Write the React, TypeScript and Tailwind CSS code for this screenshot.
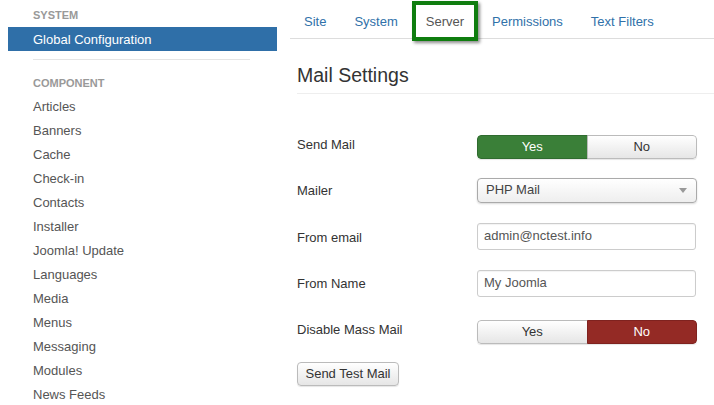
const components = [
  "Articles",
  "Banners",
  "Cache",
  "Check-in",
  "Contacts",
  "Installer",
  "Joomla! Update",
  "Languages",
  "Media",
  "Menus",
  "Messaging",
  "Modules",
  "News Feeds",
];

const tabs = ["Site", "System", "Server", "Permissions", "Text Filters"];

function Toggle({ value }: { value: "yes" | "no" }) {
  const base =
    "flex h-full flex-1 items-center justify-center border text-[13px]";
  const idle =
    "border-[#bbb] bg-gradient-to-b from-white to-[#e6e6e6] text-[#333]";
  return (
    <div className="flex h-[24px] w-[220px] overflow-hidden rounded-[4px] shadow-[0_1px_1px_rgba(0,0,0,0.1)]">
      <div
        className={`${base} rounded-l-[4px] ${
          value === "yes"
            ? "border-[#2f6b2f] bg-[#3a7f38] text-white"
            : idle
        }`}
      >
        Yes
      </div>
      <div
        className={`${base} -ml-px rounded-r-[4px] ${
          value === "no"
            ? "border-[#7f221f] bg-[#942a25] text-white"
            : idle
        }`}
      >
        No
      </div>
    </div>
  );
}

function Row({
  label,
  children,
  pad = false,
}: {
  label: string;
  children: React.ReactNode;
  pad?: boolean;
}) {
  return (
    <div className="flex h-[46px] items-center">
      <div
        className={`w-[180px] text-[13px] text-[#333] ${pad ? "pt-[2px]" : ""}`}
      >
        {label}
      </div>
      {children}
    </div>
  );
}

export default function App() {
  return (
    <div
      className="flex h-[405px] w-[714px] overflow-hidden bg-white"
      style={{ fontFamily: '"Liberation Sans", Arial, sans-serif' }}
    >
      {/* sidebar */}
      <div className="w-[290px] shrink-0 pt-[6px]">
        <div className="h-[18px] pl-[33px] text-[11px] font-bold leading-[18px] text-[#999]">
          SYSTEM
        </div>
        <div className="mt-[3px] ml-[8px] h-[24px] w-[269px] bg-[#2f6fa8] pl-[25px] text-[13px] leading-[25px] text-white">
          Global Configuration
        </div>
        <div className="mt-[8px] ml-[33px] h-px w-[217px] bg-[#e5e5e5]" />
        <div className="mt-[14px] h-[18px] pl-[33px] text-[11px] font-bold leading-[18px] text-[#999]">
          COMPONENT
        </div>
        <ul className="mt-[3px]">
          {components.map((c) => (
            <li
              key={c}
              className="h-[24px] pl-[33px] text-[13px] leading-[24px] text-[#555]"
            >
              {c}
            </li>
          ))}
        </ul>
      </div>

      {/* main */}
      <div className="flex-1">
        <div className="flex h-[39px] border-b border-[#ddd]">
          {tabs.map((t) =>
            t === "Server" ? (
              <div
                key={t}
                className="relative px-[14px] pt-[13px] text-[13px] leading-[18px] text-[#555]"
              >
                {t}
                <div className="absolute left-0 right-0 top-[1px] h-[40px] border-4 border-[#0f7d0f] shadow-[2px_2px_3px_rgba(0,0,0,0.45)]" />
              </div>
            ) : (
              <div
                key={t}
                className="px-[14px] pt-[13px] text-[13px] leading-[18px] text-[#3071a9]"
              >
                {t}
              </div>
            ),
          )}
        </div>

        <div className="pl-[7px]">
          <h3 className="mt-[24px] h-[24px] text-[19.5px] leading-[24px] text-[#333]">
            Mail Settings
          </h3>
          <div className="mt-[6px] h-px bg-[#eee]" />

          <div className="mt-[28px]">
            <Row label="Send Mail">
              <div className="mt-[3px]">
                <Toggle value="yes" />
              </div>
            </Row>
            <Row label="Mailer">
              <div className="-mt-[2px] flex h-[25px] w-[220px] items-center justify-between rounded-[4px] border border-[#aaa] bg-gradient-to-b from-white to-[#eee] pl-[8px] pr-[9px] text-[13px] text-[#444] shadow-[0_1px_2px_rgba(0,0,0,0.15)]">
                <span>PHP Mail</span>
                <svg width="8" height="5" viewBox="0 0 8 5">
                  <path d="M0 0h8L4 5z" fill="#999" />
                </svg>
              </div>
            </Row>
            <Row label="From email" pad>
              <div className="-mt-[2px] flex h-[27px] w-[219px] items-center rounded-[3px] border border-[#ccc] pl-[6px] text-[13px] text-[#555] shadow-[inset_0_1px_1px_rgba(0,0,0,0.05)]">
                admin@nctest.info
              </div>
            </Row>
            <Row label="From Name" pad>
              <div className="flex h-[27px] w-[219px] items-center rounded-[3px] border border-[#ccc] pl-[6px] text-[13px] text-[#555] shadow-[inset_0_1px_1px_rgba(0,0,0,0.05)]">
                My Joomla
              </div>
            </Row>
            <Row label="Disable Mass Mail" pad>
              <div className="mt-[6px]">
                <Toggle value="no" />
              </div>
            </Row>
          </div>

          <button
            type="button"
            className="mt-[10px] h-[24px] w-[102px] rounded-[4px] border border-[#bbb] bg-gradient-to-b from-white to-[#e6e6e6] text-[13px] text-[#333] shadow-[0_1px_1px_rgba(0,0,0,0.1)]"
          >
            Send Test Mail
          </button>
        </div>
      </div>
    </div>
  );
}
